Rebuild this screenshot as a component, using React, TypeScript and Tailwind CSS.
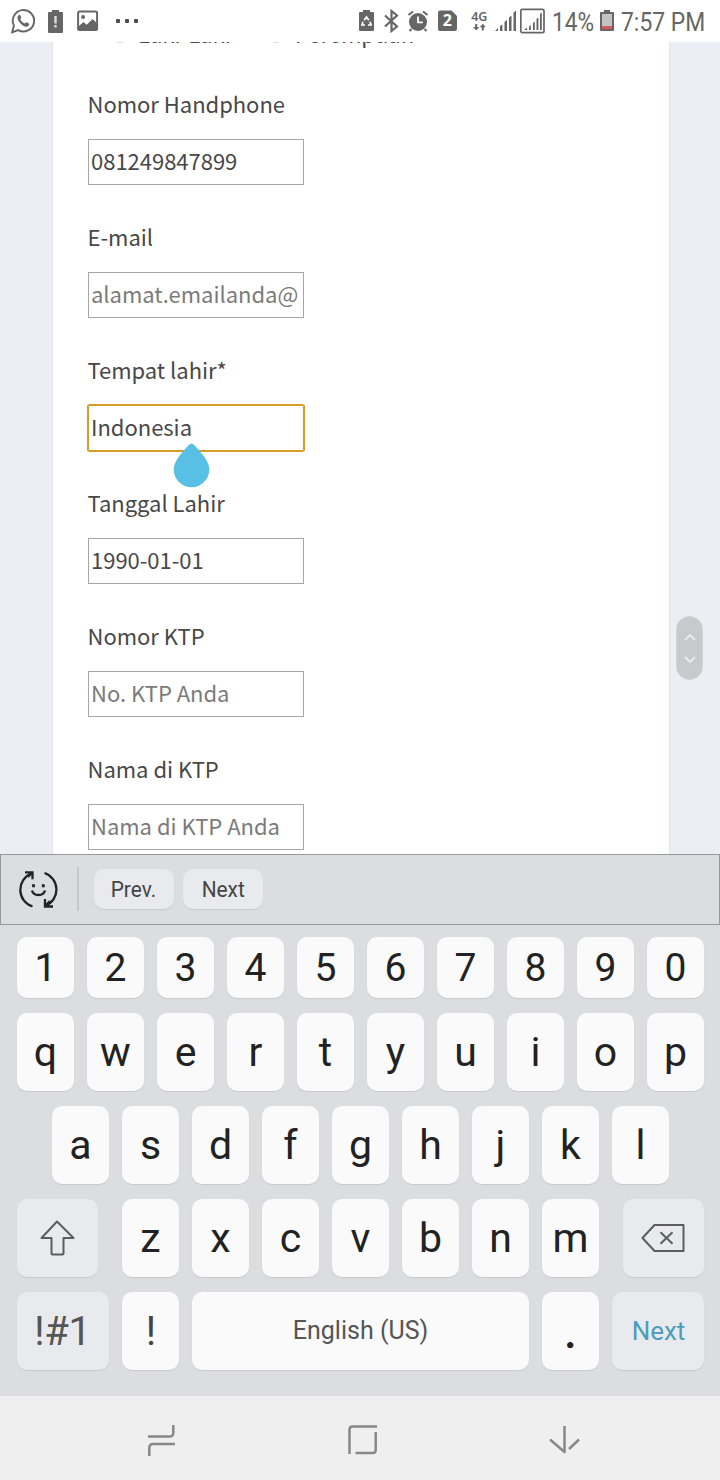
import type { ReactNode } from "react";

const formFont = "font-['Noto_Sans_CJK_JP','Noto_Sans',sans-serif]";

function StatusBar() {
  return (
    <header className="flex h-[42px] shrink-0 items-center bg-white pl-[11px] font-['Roboto',sans-serif] text-[#666]">
      <svg className="mr-[12px] shrink-0" width="24" height="26" viewBox="0 0 24 26" fill="none">
        <path d="M2.9 17.6A10.7 10.7 0 1 1 7.2 22.1L1.2 24.3Z" stroke="currentColor" strokeWidth="1.9" />
        <path d="M7.5 7.2c.8-.9 1.5-.6 1.9.3l.8 1.8c.2.6-.9 1.4-.9 1.9.9 2 2.4 3.4 4.4 4.2.7.1 1.3-1.3 1.9-1.1l2.1 1.1c.9.5.3 2.4-.8 2.9-2.1 1.1-4.8-.3-6.9-2.3-2-1.9-3.5-4.2-3.5-6.2 0-1.1.4-2 1-2.6Z" fill="currentColor" />
      </svg>
      <svg className="mr-[13px] shrink-0" width="17" height="26" viewBox="0 0 17 26">
        <path d="M2 4h3V2h7v2h3a1 1 0 0 1 1 1v19a1 1 0 0 1-1 1H2a1 1 0 0 1-1-1V5a1 1 0 0 1 1-1Z" fill="currentColor" />
        <path d="M8.5 8v7.5M8.5 17v2.500" stroke="#ddd" strokeWidth="2.400" />
      </svg>
      <svg className="mr-[18px] shrink-0" width="22" height="22" viewBox="0 0 22 22">
        <rect x="1.100" y="1.600" width="19" height="18.300" rx="1.500" fill="none" stroke="currentColor" strokeWidth="2" />
        <circle cx="6.100" cy="7" r="2" fill="currentColor" />
        <path d="M2 16l4.500-4 3.200 2.700L15.500 9l4.700 4.200V20H2Z" fill="currentColor" />
      </svg>
      <div className="-ml-px flex gap-[5px]">
        <i className="size-1 rounded-[1px] bg-[#4d4d4d]" />
        <i className="size-1 rounded-[1px] bg-[#4d4d4d]" />
        <i className="size-1 rounded-[1px] bg-[#4d4d4d]" />
      </div>
      <div className="ml-auto flex items-center pr-[14px]">
        <svg className="mr-[10px] shrink-0" width="15" height="24" viewBox="0 0 15 24">
          <path d="M1 3h3V1h7v2h3q1 0 1 1v17q0 1-1 1H1q-1 0-1-1V4q0-1 1-1Z" fill="currentColor" />
          <path d="M5.200 11.300 7.500 8 9.800 11.300M11 12.800l1 3.200H9M6 16H3l1-3.200" fill="none" stroke="#fff" strokeWidth="1.700" />
        </svg>
        <svg className="mr-[8px] shrink-0" width="15" height="24" viewBox="0 0 15 24" fill="none" stroke="currentColor" strokeWidth="2.200">
          <path d="M1 6.500 13 17.500 7.500 22V2L13 6.500 1 17.500" />
        </svg>
        <svg className="mr-[9px] shrink-0" width="22" height="24" viewBox="0 0 22 24">
          <circle cx="11" cy="13" r="9" fill="currentColor" />
          <path d="M1.500 6 6 2.500M16 2.500 20.500 6M4.500 20 2.500 22M17.500 20l2 2" stroke="currentColor" strokeWidth="2" />
          <path d="M11 7.500v5.800h4.800" fill="none" stroke="#fff" strokeWidth="1.800" />
        </svg>
        <svg className="mr-[14px] shrink-0" width="19" height="22" viewBox="0 0 19 22">
          <path d="M2 .5h11.500L19 6v13q0 2-2 2H2q-2 0-2-2V2.500Q0 .5 2 .5Z" fill="currentColor" />
          <text x="9.300" y="16.200" textAnchor="middle" fill="#fff" fontSize="16" fontWeight="700" fontFamily="Open Sans">2</text>
        </svg>
        <svg className="mr-[7px] shrink-0 overflow-visible" width="17" height="24" viewBox="0 0 17 24">
          <text x="8.300" y="11.500" textAnchor="middle" fill="currentColor" fontSize="12.500" fontWeight="600" fontFamily="Noto Sans">4G</text>
          <path d="M5.200 15v4M11.800 21.500v-4" stroke="currentColor" strokeWidth="2" />
          <path d="M2.200 18h6l-3 3.500ZM8.800 18.300h6l-3-3.500Z" fill="currentColor" />
        </svg>
        <svg className="mr-[3px] shrink-0" width="22" height="24" viewBox="0 0 22 24" fill="currentColor">
          <path d="M0 22h3v-3ZM5 17l2.400-1.500V22H5ZM9.500 13l2.500-2v11H9.500ZM14 8.500l2.500-2V22H14ZM18.500 3.500 21 1.500V22h-2.500Z" />
        </svg>
        <svg className="mr-[9px] shrink-0" width="25" height="26" viewBox="0 0 25 26" fill="currentColor">
          <rect x=".8" y="1.300" width="23.200" height="23.400" rx="1.500" fill="none" stroke="currentColor" strokeWidth="1.700" />
          <path d="M4 22h3v-2.500ZM9 18.500l1.800-1.500v5H9ZM13 15l1.800-1.500V22H13ZM16.500 11l1.900-1.500V22h-1.900ZM20 6l1.800-1.800V22H20Z" />
        </svg>
        <span className="mt-[2px] mr-[6px] -ml-[2px] w-[42px] whitespace-nowrap text-[26px] leading-[42px]">
          <span className="inline-block origin-left scale-x-[.87]">14%</span>
        </span>
        <svg className="mr-[7px] shrink-0" width="14" height="24" viewBox="0 0 14 24">
          <path d="M1 3h3V1h6v2h3q1 0 1 1v17q0 1-1 1H1q-1 0-1-1V4q0-1 1-1Z" fill="currentColor" />
          <path d="M2 5h10v12H2Z" fill="#c4c4c4" />
          <path d="M2 17h10v3H2Z" fill="#d55b5b" />
        </svg>
        <span className="mt-[2px] w-[85px] whitespace-nowrap text-[26px] leading-[42px]">
          <span className="inline-block origin-left scale-x-[.88]">7:57 PM</span>
        </span>
      </div>
    </header>
  );
}

type FieldProps = { label: string; value?: string; placeholder?: string; focused?: boolean };

function Field({ label, value, placeholder, focused }: FieldProps) {
  return (
    <div className="relative mb-[31px]">
      <div className="mb-4 -ml-[0.5px] h-10 leading-10 tracking-[-0.02px] text-[#484848]">{label}</div>
      <div
        role="textbox"
        aria-label={label}
        className={
          "h-[46px] w-[216px] overflow-hidden border pl-[2px] leading-[41px] tracking-[-0.02px] whitespace-nowrap " +
          (focused ? "rounded-[1px] border-[#d99c25] outline-1 outline-[#d99c25] " : "border-[#a6a6a6] ") +
          (value ? "text-[#484848]" : "text-[#7b7b7b]")
        }
      >
        {value ?? placeholder}
      </div>
      {focused && (
        <svg className="absolute top-[93px] left-[84.5px]" width="37" height="46" viewBox="0 0 37 46">
          <path d="M18.500 1.500C20.500 1.500 24 6 29.500 12.500 34 18 36.300 23 36.300 27.500a17.800 17.800 0 0 1-35.600 0C.7 23 3 18 7.500 12.500 13 6 16.500 1.500 18.500 1.500Z" fill="#58bfe5" />
        </svg>
      )}
    </div>
  );
}

function Key({ children, className = "", width = "w-[57px]" }: { children: ReactNode; className?: string; width?: string }) {
  return (
    <div
      className={`flex h-full shrink-0 items-center justify-center rounded-[10px] shadow-[0_1px_1px_#c8c9cd] ${width} ${className || "bg-[#fafafa] text-[#222]"}`}
    >
      {children}
    </div>
  );
}

function Letters({ keys }: { keys: string }) {
  return (
    <>
      {keys.split("").map((k) => (
        <Key key={k}>
          <span className="text-[41px] leading-none">{k}</span>
        </Key>
      ))}
    </>
  );
}

function Keyboard() {
  return (
    <section className="h-[542px] shrink-0 bg-[#dcdde1] font-['Roboto',sans-serif]">
      <div className="flex h-[71px] items-center border border-[#98989b] pb-px pl-[18px]">
        <svg width="40" height="40" viewBox="0 0 40 40" fill="none" stroke="#222" strokeWidth="2.300">
          <path d="M13.500 37.500A17.500 17.500 0 0 1 12.500 4.500M6 3.300h7.500v7M25.500 4A17.500 17.500 0 0 1 26.500 36.800M26 30v7.500h8M13.300 3.500 9 8M26 37l5-5" />
          <path d="M13 21.500c1.500 6 11.500 6 13 0" />
          <path d="M14.500 15.200v3M24.300 15.200v3" strokeWidth="2.800" />
        </svg>
        <div className="ml-[18px] h-11 w-[2px] bg-[#c7c8cb]" />
        <div className="ml-[15px] flex h-10 gap-[9px] text-[21.500px] text-[#444]">
          <Key width="w-20" className="bg-[#e9eaee] pt-[3px] pr-px">
            <span className="scale-x-[.97]">Prev.</span>
          </Key>
          <Key width="w-20" className="bg-[#e9eaee] pt-[3px]">
            <span className="scale-x-[.97]">Next</span>
          </Key>
        </div>
      </div>
      <div className="flex flex-col gap-[15px] px-[17px] pt-[12px]">
        <div className="flex h-[61px] gap-[13px]">
          {"1234567890".split("").map((k) => (
            <Key key={k}>
              <span className="pt-[2px] text-[39px] leading-none">{k}</span>
            </Key>
          ))}
        </div>
        <div className="flex h-[78px] gap-[13px]"><Letters keys="qwertyuiop" /></div>
        <div className="flex h-[78px] gap-[13px] pl-[35px]"><Letters keys="asdfghjkl" /></div>
        <div className="flex h-[78px]">
          <Key width="w-[81px]" className="bg-[#e9eaee]">
            <svg className="-mt-px" width="38" height="38" viewBox="0 0 38 38" fill="none" stroke="#5d5d5d" strokeWidth="2" strokeLinejoin="round">
              <path d="M18 2.500 34.500 19h-10v15.500q0 1-1 1H13.500q-1 0-1-1V19h-10Z" />
            </svg>
          </Key>
          <div className="mx-6 flex gap-[13px]"><Letters keys="zxcvbnm" /></div>
          <Key width="w-[81px]" className="bg-[#e9eaee]">
            <svg className="-ml-[2px]" width="44" height="30" viewBox="0 0 44 30" fill="none" stroke="#5d5d5d" strokeWidth="2" strokeLinejoin="round">
              <path d="M1.500 15 13.500 2h29v26h-29ZM19.500 9.300l12 11.500M31.500 9.300l-12 11.500" />
            </svg>
          </Key>
        </div>
        <div className="flex h-[78px] gap-[13px]">
          <Key width="w-[92px]" className="bg-[#e9eaee] pt-[2px] pr-1 text-[40px] tracking-[-0.3px] text-[#555]">
            <span className="pl-[3px]">!#1</span>
          </Key>
          <Key className="bg-[#fafafa] pt-px pl-px text-[40px] text-[#444]">!</Key>
          <Key width="w-[337px]" className="bg-[#fafafa] text-[25px] text-[#555]">English (US)</Key>
          <Key className="bg-[#fafafa] pt-[2px] text-[46px] leading-none font-medium text-[#222]">.</Key>
          <Key width="w-[92px]" className="bg-[#e9eaee] pl-px text-[26px] text-[#4d9dbb]">Next</Key>
        </div>
      </div>
    </section>
  );
}

function NavBar() {
  return (
    <nav className="flex h-[84px] shrink-0 items-center bg-[#efefef] pt-[4px] pl-[147px] text-[#888]">
      <svg width="30" height="34" viewBox="0 0 30 34" fill="none" stroke="currentColor" strokeWidth="2.500">
        <path d="M1 13.600h21.500q3.800 0 3.800-3.800V2M2.300 33v-8q0-4 4-4H28" />
      </svg>
      <svg className="ml-[170px]" width="32" height="32" viewBox="0 0 32 32" fill="none" stroke="currentColor" strokeWidth="2.500">
        <path d="M2.500 30V5.500q0-3 3-3H30M28.700 8v18q0 3-3 3H8.500" />
      </svg>
      <svg className="ml-[169px]" width="34" height="32" viewBox="0 0 34 32" fill="none" stroke="currentColor" strokeWidth="2.500" strokeLinejoin="round">
        <path d="M16.500 2v26L2 15.500M31 15.500 21 25" />
      </svg>
    </nav>
  );
}

export default function App() {
  return (
    <div className="flex h-[1480px] w-[720px] flex-col overflow-hidden bg-white">
      <StatusBar />
      <main className={`relative h-[812px] shrink-0 overflow-hidden bg-[#ebeef3] px-[52px] text-[22px] ${formFont}`}>
        <div className="mr-[-2px] h-[860px] w-[618px] border-x border-[#e3e5e8] bg-white pl-[35px]">
          <div className="-mt-[29px] mb-[30px] flex h-10 items-center leading-10 text-[#484848]">
            <i className="ml-[22px] size-[20px] rounded-full border-2 border-[#ddd]" />
            <span className="ml-[8px] w-[132px]">Laki-Laki</span>
            <i className="-ml-[4px] size-[20px] rounded-full border-2 border-[#ddd]" />
            <span className="ml-[9px]">Perempuan</span>
          </div>
          <Field label="Nomor Handphone" value="081249847899" />
          <Field label="E-mail" placeholder="alamat.emailanda@" />
          <Field label="Tempat lahir*" value="Indonesia" focused />
          <Field label="Tanggal Lahir" value="1990-01-01" />
          <Field label="Nomor KTP" placeholder="No. KTP Anda" />
          <Field label="Nama di KTP" placeholder="Nama di KTP Anda" />
        </div>
        <div className="absolute top-[574px] left-[676px] flex h-[64px] w-[27px] flex-col items-center justify-center gap-[15px] rounded-full border border-[#d1d3d5] bg-[#c8c9cb]">
          <svg width="12" height="8" viewBox="0 0 12 8" fill="none" stroke="#e9ebee" strokeWidth="1.800"><path d="M1 7 6 2l5 5" /></svg>
          <svg width="12" height="8" viewBox="0 0 12 8" fill="none" stroke="#e9ebee" strokeWidth="1.800"><path d="m1 1 5 5 5-5" /></svg>
        </div>
      </main>
      <Keyboard />
      <NavBar />
    </div>
  );
}
